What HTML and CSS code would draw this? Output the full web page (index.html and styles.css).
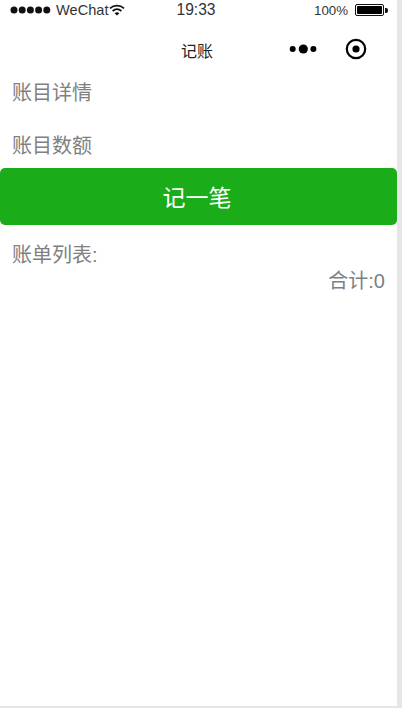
FILE: index.html
```html
<!DOCTYPE html>
<html lang="zh">
<head>
    <meta charset="UTF-8">
    <title>记账</title>
    <link rel="stylesheet" href="styles.css">
</head>
<body>
    <div class="page">
        <div class="status-bar">
            <div class="status-left">
                <svg class="signal" width="41" height="8" viewBox="0 0 41 8">
                    <circle cx="4" cy="4" r="3.5"/>
                    <circle cx="12.2" cy="4" r="3.5"/>
                    <circle cx="20.4" cy="4" r="3.5"/>
                    <circle cx="28.6" cy="4" r="3.5"/>
                    <circle cx="36.8" cy="4" r="3.5"/>
                </svg>
                <span class="carrier">WeChat</span>
                <svg class="wifi" width="16" height="12" viewBox="0 0 16 12">
                    <path d="M1 4.4C5 .8 11 .8 15 4.4" fill="none" stroke="#111" stroke-width="1.7"/>
                    <path d="M3.6 7C6.2 4.8 9.8 4.8 12.4 7" fill="none" stroke="#111" stroke-width="1.7"/>
                    <path d="M5.6 9.2C7 8 9 8 10.4 9.2L8 11.6Z" fill="#111"/>
                </svg>
            </div>
            <div class="status-time">19:33</div>
            <div class="status-right">
                <span class="percent">100%</span>
                <div class="battery"><div class="battery-fill"></div></div>
                <div class="battery-tip"></div>
            </div>
        </div>
        <div class="nav-bar">
            <div class="nav-title">记账</div>
            <div class="capsule">
                <svg width="28" height="10" viewBox="0 0 28 10">
                    <circle cx="3.7" cy="5" r="3"/>
                    <circle cx="14.3" cy="5" r="4.6"/>
                    <circle cx="24.4" cy="5" r="3"/>
                </svg>
                <svg width="22" height="22" viewBox="0 0 22 22">
                    <circle cx="11" cy="11" r="9.2" fill="none" stroke="#000" stroke-width="2.2"/>
                    <circle cx="11" cy="11" r="3.6"/>
                </svg>
            </div>
        </div>
        <div class="fields">
            <div class="field">账目详情</div>
            <div class="field">账目数额</div>
        </div>
        <button class="add-button">记一笔</button>
        <div class="list-title">账单列表:</div>
        <div class="total">合计:0</div>
    </div>
</body>
</html>
```

FILE: styles.css
```css
html, body {
    margin: 0;
    height: 100%;
}
body {
    background: #e6e6e6;
    font-family: "Liberation Sans", "Noto Sans CJK SC", sans-serif;
    overflow: hidden;
}
.page {
    width: 397px;
    height: 706px;
    background: #fff;
}
.status-bar {
    display: grid;
    grid-template-columns: 1fr auto 1fr;
    align-items: center;
    height: 20px;
    padding-right: 5px;
    color: #333;
}
.status-left {
    display: flex;
    align-items: center;
    padding-left: 10px;
}
.signal {
    fill: #111;
}
.carrier {
    margin-left: 5px;
    font-size: 14.6px;
}
.wifi {
    margin-left: 1px;
}
.status-time {
    font-size: 15.6px;
}
.status-right {
    display: flex;
    align-items: center;
    justify-content: flex-end;
    padding-right: 4px;
}
.percent {
    font-size: 13.3px;
    margin-right: 7px;
}
.battery {
    box-sizing: border-box;
    width: 29px;
    height: 12px;
    border: 1px solid #111;
    border-radius: 2px;
    padding: 1px;
}
.battery-fill {
    height: 100%;
    background: #000;
    border-radius: 1px;
}
.battery-tip {
    width: 3px;
    height: 5px;
    margin-left: 1px;
    background: #111;
    border-radius: 0 2px 2px 0;
}
.nav-bar {
    position: relative;
    display: flex;
    justify-content: center;
    align-items: center;
    box-sizing: border-box;
    height: 62px;
    padding: 0 3px 3px 0;
}
.nav-title {
    font-size: 16px;
    color: #222;
}
.capsule {
    position: absolute;
    top: 18px;
    left: 289px;
    display: flex;
    align-items: center;
    gap: 28px;
    fill: #000;
}
.fields {
    display: flex;
    flex-direction: column;
    gap: 31px;
    padding-left: 12px;
}
.field {
    line-height: 22px;
    font-size: 20px;
    color: #808080;
}
.add-button {
    display: block;
    width: 397px;
    height: 57px;
    margin-top: 11px;
    padding: 0 3px 2px 0;
    border: none;
    border-radius: 5px;
    background: #1aad19;
    color: #fff;
    font: inherit;
    font-size: 23px;
}
.list-title {
    margin-top: 17px;
    padding-left: 12px;
    font-size: 20px;
    line-height: 27px;
    color: #808080;
}
.total {
    margin-top: -1px;
    padding-right: 12px;
    text-align: right;
    font-size: 20px;
    line-height: 27px;
    color: #7b8087;
}
```
